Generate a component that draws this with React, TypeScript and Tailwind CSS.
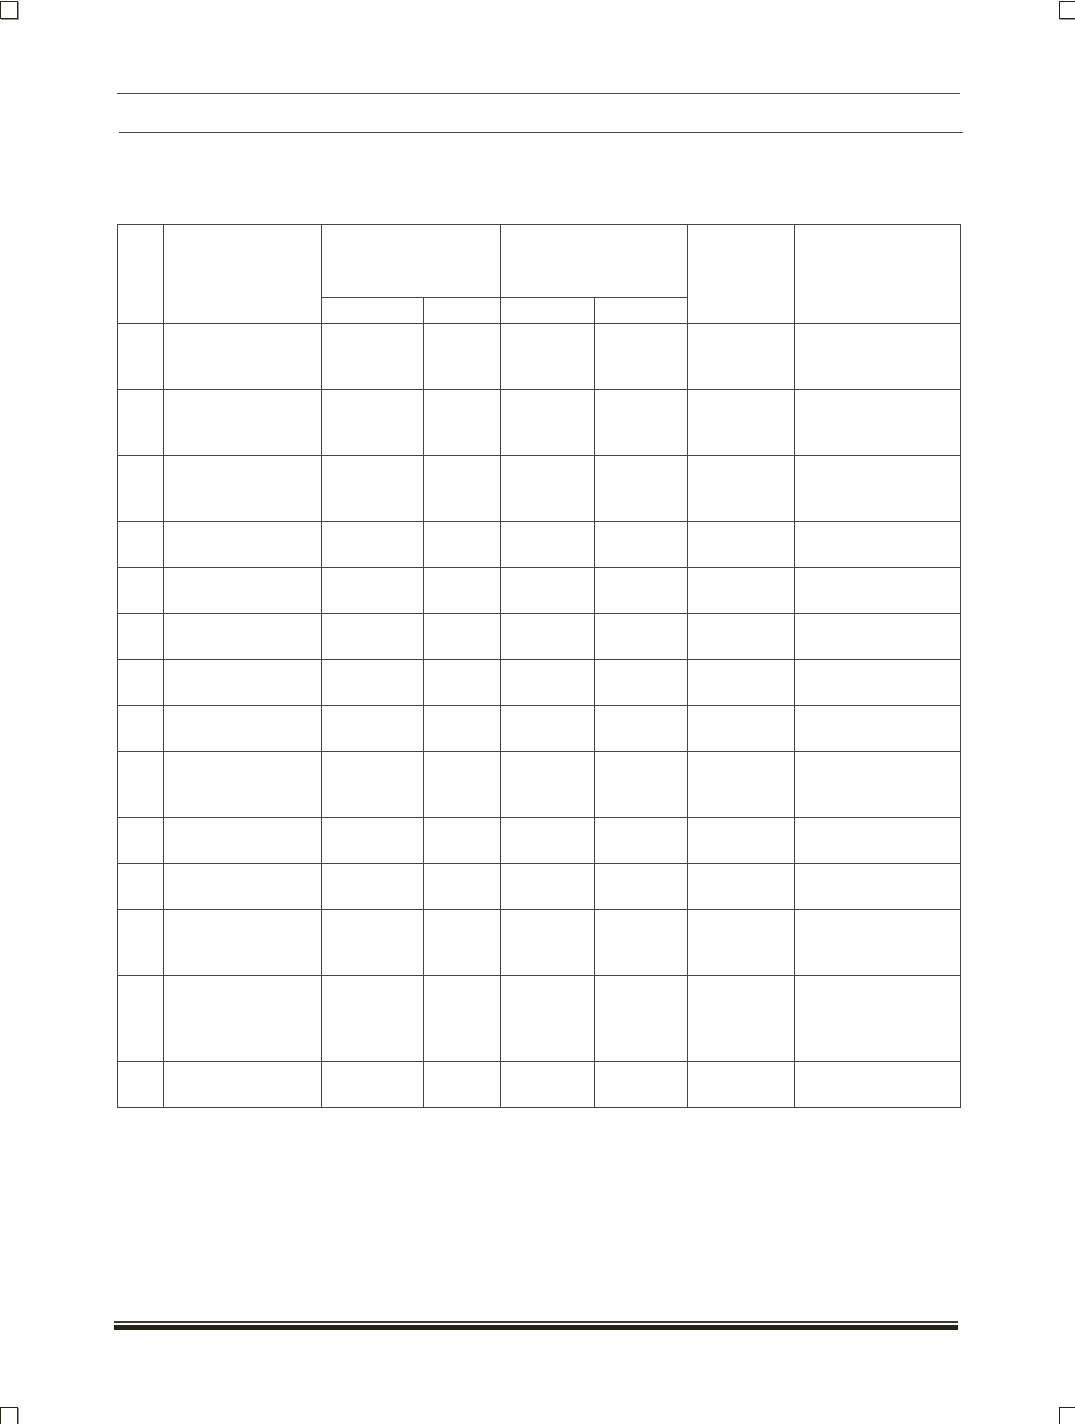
import React from "react";

const rowHeights = [66, 66, 66, 46, 46, 46, 46, 46, 66, 46, 46, 66, 86, 46];

function Mark() {
  return (
    <div className="w-[18px] h-[18px] border border-[#2a2418] bg-white shadow-[1px_1px_0_#9a9690]" />
  );
}

export default function App() {
  const cell = "border border-[#444444] p-0";
  return (
    <div className="relative w-[1075px] h-[1424px] bg-white overflow-hidden" style={{ fontFamily: '"Liberation Sans", Arial, sans-serif' }}>
      {/* crop marks */}
      <div className="absolute left-0 top-[1px]"><Mark /></div>
      <div className="absolute left-[1059px] top-[1px]"><Mark /></div>
      <div className="absolute left-0 top-[1407px]"><Mark /></div>
      <div className="absolute left-[1059px] top-[1407px]"><Mark /></div>

      <div className="flex flex-col pt-[93px]">
        <div className="ml-[117px] w-[843px] h-px bg-[#4a4a4a]" />
        <div className="mt-[38px] ml-[119px] w-[844px] h-px bg-[#4a4a4a]" />

        <table className="mt-[91px] ml-[117px] w-[843px] table-fixed border-collapse">
          <colgroup>
            <col className="w-[46px]" />
            <col className="w-[158px]" />
            <col className="w-[102px]" />
            <col className="w-[77px]" />
            <col className="w-[94px]" />
            <col className="w-[93px]" />
            <col className="w-[107px]" />
            <col className="w-[166px]" />
          </colgroup>
          <tbody>
            <tr className="h-[73px]">
              <td rowSpan={2} className={cell} />
              <td rowSpan={2} className={cell} />
              <td colSpan={2} className={cell} />
              <td colSpan={2} className={cell} />
              <td rowSpan={2} className={cell} />
              <td rowSpan={2} className={cell} />
            </tr>
            <tr className="h-[26px]">
              <td className={cell} />
              <td className={cell} />
              <td className={cell} />
              <td className={cell} />
            </tr>
            {rowHeights.map((h, i) => (
              <tr key={i} style={{ height: h }}>
                {Array.from({ length: 8 }).map((_, j) => (
                  <td key={j} className={cell} />
                ))}
              </tr>
            ))}
          </tbody>
        </table>

        <div className="mt-[213px] ml-[114px] w-[844px] flex flex-col">
          <div className="h-[2px] bg-[#3d3a35]" />
          <div className="h-[2px] bg-white" />
          <div className="h-[5px] bg-[#2a2418]" />
        </div>
      </div>
    </div>
  );
}
